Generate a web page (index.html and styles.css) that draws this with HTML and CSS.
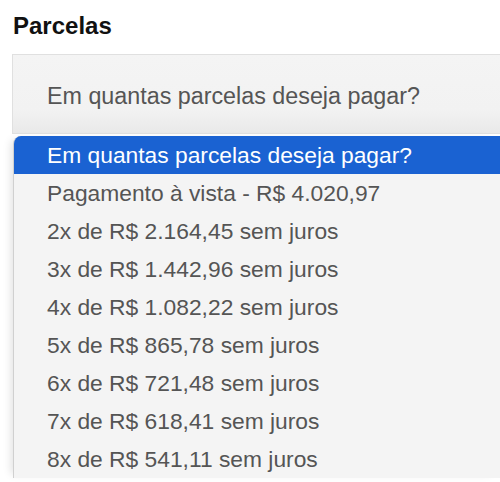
FILE: index.html
```html
<!DOCTYPE html>
<html lang="pt-BR">
<head>
<meta charset="utf-8">
<link rel="stylesheet" href="styles.css">
</head>
<body>
<div class="page">
  <h3 class="label">Parcelas</h3>
  <div class="select">Em quantas parcelas deseja pagar?</div>
  <ul class="dropdown">
    <li class="opt selected">Em quantas parcelas deseja pagar?</li>
    <li class="opt">Pagamento à vista - R$ 4.020,97</li>
    <li class="opt">2x de R$ 2.164,45 sem juros</li>
    <li class="opt">3x de R$ 1.442,96 sem juros</li>
    <li class="opt">4x de R$ 1.082,22 sem juros</li>
    <li class="opt">5x de R$ 865,78 sem juros</li>
    <li class="opt">6x de R$ 721,48 sem juros</li>
    <li class="opt">7x de R$ 618,41 sem juros</li>
    <li class="opt">8x de R$ 541,11 sem juros</li>
  </ul>
</div>
</body>
</html>
```
FILE: styles.css
```css
* { box-sizing: border-box; }
html, body {
  margin: 0;
  padding: 0;
  background: #ffffff;
  overflow: hidden;
}
body {
  width: 500px;
  height: 482px;
  font-family: "Liberation Sans", Arial, sans-serif;
}
.page {
  display: flex;
  flex-direction: column;
}
.label {
  margin: 11px 0 0 13px;
  font-size: 24px;
  line-height: 30px;
  font-weight: bold;
  color: #111;
}
.select {
  margin: 13px 0 0 12px;
  height: 80px;
  border: 1px solid #e0e0e0;
  border-right: none;
  background: linear-gradient(#f4f4f4, #f2f2f2 70%, #e9e9e9);
  color: #555;
  font-size: 23.3px;
  padding: 5px 0 0 34px;
  display: flex;
  align-items: center;
  white-space: nowrap;
  overflow: hidden;
}
.dropdown {
  list-style: none;
  margin: 2px 0 0 13px;
  padding: 0;
  background: #f4f4f4;
  border-left: 1px solid #d0d0d0;
  border-top-left-radius: 8px;
  overflow: hidden;
  box-shadow: -6px 0 8px -4px rgba(0,0,0,0.12);
}
.opt {
  height: 38px;
  line-height: 38px;
  padding-left: 33px;
  font-size: 22.8px;
  color: #555;
  white-space: nowrap;
}
.opt.selected {
  background: #1a62d2;
  color: #ffffff;
}
```
